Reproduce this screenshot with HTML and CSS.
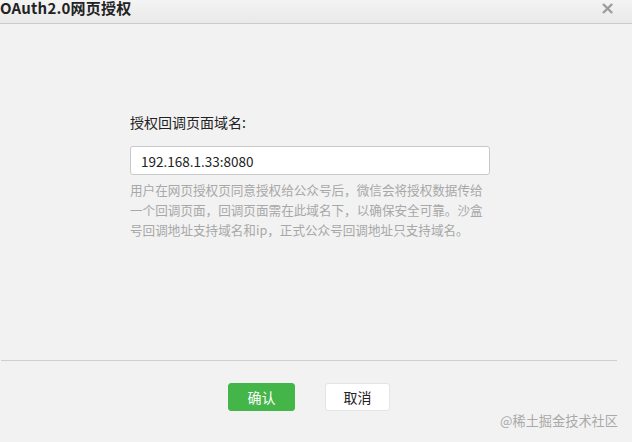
FILE: index.html
```html
<!DOCTYPE html>
<html lang="zh-CN">
<head>
    <meta charset="UTF-8">
    <meta name="viewport" content="width=device-width, initial-scale=1.0">
    <title>OAuth2.0网页授权</title>
    <link rel="stylesheet" href="styles.css">
</head>
<body>
    <div class="dialog">
        <div class="dialog-head">
            <h3 class="dialog-title">OAuth2.0网页授权</h3>
            <a href="#" class="dialog-close">&times;</a>
        </div>

        <div class="dialog-body">
            <label class="field-label" for="domain">授权回调页面域名:</label>
            <input type="text" id="domain" class="field-input" value="192.168.1.33:8080">
            <p class="field-tips">用户在网页授权页同意授权给公众号后，微信会将授权数据传给一个回调页面，回调页面需在此域名下，以确保安全可靠。沙盒号回调地址支持域名和ip，正式公众号回调地址只支持域名。</p>
        </div>

        <div class="dialog-foot">
            <button class="btn btn-primary">确认</button>
            <button class="btn btn-default">取消</button>
        </div>
    </div>

    <div class="watermark">@稀土掘金技术社区</div>
</body>
</html>
```

FILE: styles.css
```css
body { margin: 0; padding: 0; background-color: #f2f2f2; font-family: "Noto Sans CJK SC", "Noto Sans", sans-serif; color: #222; }
.dialog { width: 632px; height: 442px; }
.dialog-head { height: 23px; display: flex; justify-content: space-between; align-items: flex-start; background: linear-gradient(#f4f4f4, #e9e9e9); border-bottom: 1px solid #cbcbcb; }
.dialog-title { margin: 0; font-size: 15px; font-weight: bold; line-height: 15px; letter-spacing: 0.2px; color: #222; }
.dialog-close { margin: 1px 17px 0 0; font-family: "DejaVu Sans", sans-serif; font-size: 18px; font-weight: bold; line-height: 14px; color: #9b9b9b; text-decoration: none; }
.dialog-body { height: 337px; box-sizing: border-box; padding: 88px 0 0 130px; border-bottom: 1px solid #cfcfcf; margin-right: 15px; margin-left: 1px; }
.field-label { display: block; font-size: 14px; line-height: 20px; color: #222; margin-left: -1px; }
.field-input { display: block; width: 360px; height: 29px; box-sizing: border-box; margin: 14px 0 0 -1px; padding: 0 10px; border: 1px solid #c9c9c9; border-radius: 3px; background: white; font-family: "Noto Sans CJK SC", sans-serif; font-size: 13.5px; color: #222; outline: none; }
.field-tips { width: 360px; margin: 5px 0 0 -1px; font-size: 12.6px; line-height: 20px; color: #a8a8a8; }
.dialog-foot { display: flex; gap: 30px; padding: 22px 0 0 228px; }
.btn { height: 28px; padding: 0; border-radius: 3px; font-family: "Noto Sans CJK SC", sans-serif; font-size: 14px; cursor: pointer; }
.btn-primary { width: 67px; background-color: #44b549; border: 1px solid #44b549; color: white; }
.btn-default { width: 65px; background-color: white; border: 1px solid #e4e4e4; color: #222; }
.watermark { position: absolute; right: 14px; bottom: 12px; font-size: 13.2px; line-height: 18px; color: #a9a9a9; }
```
